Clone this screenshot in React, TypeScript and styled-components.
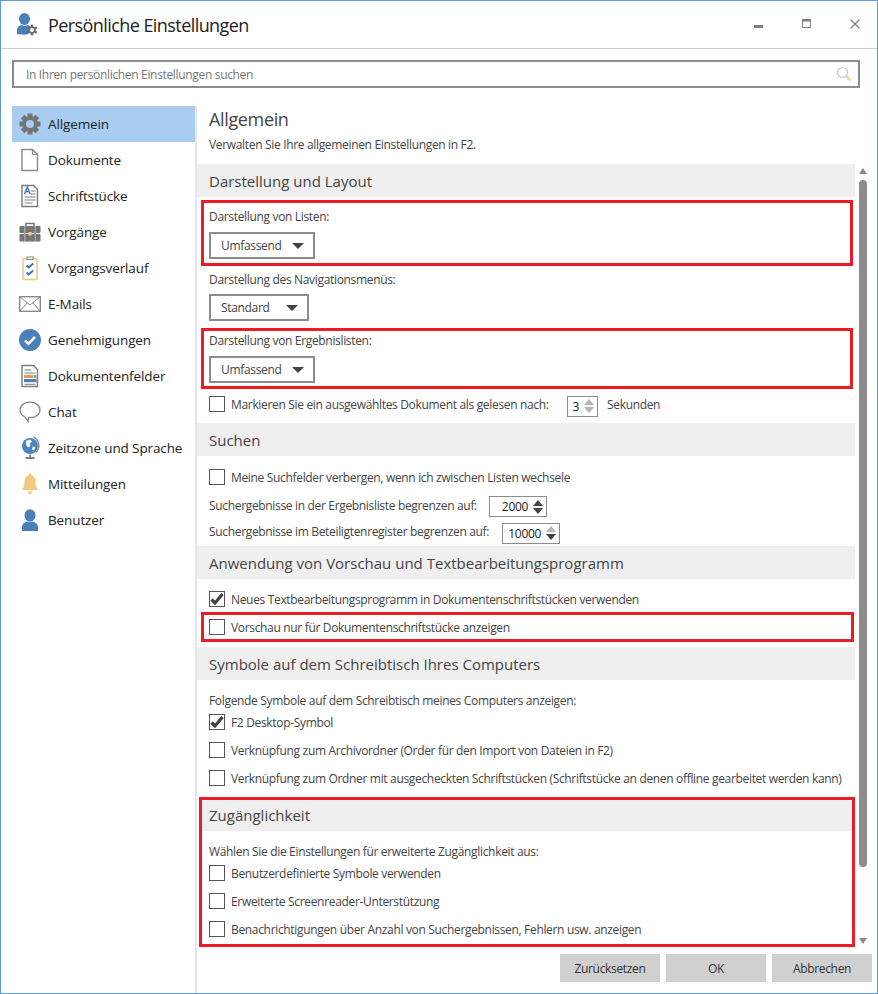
import React from "react";
import styled, { createGlobalStyle } from "styled-components";

const GlobalStyle = createGlobalStyle`
  html, body {
    margin: 0;
    padding: 0;
    background: #fff;
  }
  body {
    font-family: "Open Sans", "Liberation Sans", sans-serif;
    font-size: 12px;
    letter-spacing: -0.33px;
    color: #444;
  }
`;

const GearIcon = () => (
  <svg width="22" height="22" viewBox="0 0 22 22">
    <g fill="#757575">
      {[0, 45, 90, 135, 180, 225, 270, 315].map((a) => (
        <rect key={a} x="8.5" y="0.5" width="5" height="5" rx="0.8" transform={`rotate(${a} 11 11)`} />
      ))}
    </g>
    <circle cx="11" cy="11" r="6" fill="none" stroke="#757575" strokeWidth="4" />
  </svg>
);

const DocIcon = () => (
  <svg width="22" height="24" viewBox="0 0 22 24">
    <path d="M3 1.5h10.5l5 5v16H3z" fill="#fff" stroke="#8a8a8a" strokeWidth="1.4" />
    <path d="M13.5 1.5v5h5" fill="none" stroke="#8a8a8a" strokeWidth="1.2" />
  </svg>
);

const PaperIcon = () => (
  <svg width="22" height="24" viewBox="0 0 22 24">
    <path d="M3 1.5h11.5l4 4v17H3z" fill="#fff" stroke="#7d7d7d" strokeWidth="1.4" />
    <path d="M5.5 10l2.8-7 2.8 7M6.6 7.6h3.4" fill="none" stroke="#3f7fc4" strokeWidth="1.5" />
    <path d="M12 7h4.5M12 10h4.5M5.5 13h11M5.5 16h11M5.5 19h8" stroke="#7d7d7d" strokeWidth="1.2" />
  </svg>
);

const CaseIcon = () => (
  <svg width="22" height="20" viewBox="0 0 22 20">
    <path d="M7 4V1.5h8V4" fill="none" stroke="#757575" strokeWidth="1.5" />
    <rect x="0.5" y="4" width="21" height="7" rx="1" fill="#757575" />
    <rect x="0.5" y="12" width="21" height="7.5" rx="1" fill="#757575" />
    <rect x="5" y="4" width="1.5" height="15.5" fill="#a3a3a3" />
    <rect x="15.5" y="4" width="1.5" height="15.5" fill="#a3a3a3" />
    <rect x="9.5" y="10" width="3" height="3.5" fill="#f3c97f" />
  </svg>
);

const ClipIcon = () => (
  <svg width="22" height="26" viewBox="0 0 22 26">
    <rect x="4" y="3.5" width="14" height="21" rx="1" fill="#fff" stroke="#efc583" strokeWidth="1.5" />
    <path d="M8 4.5V2h6v2.5z" fill="#fff" stroke="#8a8a8a" strokeWidth="1.2" />
    <path d="M7.5 10.5l2.2 2 4.500-4M7.5 17.5l2.2 2 4.500-4" fill="none" stroke="#3d78b8" strokeWidth="2" />
  </svg>
);

const MailIcon = () => (
  <svg width="22" height="16" viewBox="0 0 22 16">
    <rect x="0.7" y="0.7" width="20.6" height="14.6" fill="#fff" stroke="#8a8a8a" strokeWidth="1.4" />
    <path d="M1 1l10 8 10-8M1 15l7.5-8.5M21 15l-7.5-8.5" fill="none" stroke="#8a8a8a" strokeWidth="1" />
  </svg>
);

const ApproveIcon = () => (
  <svg width="22" height="22" viewBox="0 0 22 22">
    <circle cx="11" cy="11" r="11" fill="#4a7fb8" />
    <path d="M6 11.5l3.5 3.2 6.5-6.7" fill="none" stroke="#fff" strokeWidth="2.6" />
  </svg>
);

const FieldsIcon = () => (
  <svg width="22" height="24" viewBox="0 0 22 24">
    <path d="M3 1.5h11.5l4 4v17H3z" fill="#fff" stroke="#7d7d7d" strokeWidth="1.4" />
    <path d="M5.5 6h7M5.5 9h11" stroke="#7d7d7d" strokeWidth="1.2" />
    <rect x="5" y="11" width="9" height="3" fill="#ec9a54" />
    <rect x="14.5" y="11" width="3" height="3" fill="#6fb38b" />
    <rect x="5" y="15" width="12.5" height="3.2" fill="#4a7fb8" />
    <path d="M5.5 20.3h11" stroke="#7d7d7d" strokeWidth="1" />
  </svg>
);

const ChatIcon = () => (
  <svg width="22" height="22" viewBox="0 0 22 22">
    <path d="M11 1.2c5.6 0 10 3.2 10 7.8s-4.4 7.6-9.5 7.6l-2 .1-.1 4-3.8-5C2.8 14.500 1 12 1 9c0-4.600 4.400-7.800 10-7.800z" fill="#fff" stroke="#8a8a8a" strokeWidth="1.3" />
  </svg>
);

const GlobeIcon = () => (
  <svg width="22" height="24" viewBox="0 0 22 24">
    <circle cx="11" cy="10" r="8" fill="#4a84c4" />
    <path d="M7 5l4-1.5 2 2-2.5 2.5 1 2-2.5 1.5-2-3zM13.5 10.5l3 .5-1.5 3.5-2-1z" fill="#fff" />
    <path d="M14.5 1.2a9.5 9.5 0 0 1 2.5 15.3" fill="none" stroke="#8a8a8a" strokeWidth="1.4" />
    <path d="M11 18.5v2.5M6.5 22h9" stroke="#7d7d7d" strokeWidth="1.8" />
  </svg>
);

const BellIcon = () => (
  <svg width="22" height="22" viewBox="0 0 22 22">
    <path d="M11 .5c1 0 1.5.7 1.5 1.7 3 .8 4 3.500 4 6.500 0 4 1 6.500 3 8.300H2.500c2-1.800 3-4.300 3-8.300 0-3 1-5.700 4-6.500C9.500 1.200 10 .5 11 .5z" fill="#f3c97f" />
    <path d="M8.5 18.5h5c-.3 1.8-1.300 2.800-2.500 2.800s-2.200-1-2.500-2.800z" fill="#f3c97f" />
  </svg>
);

const UserIcon = () => (
  <svg width="22" height="22" viewBox="0 0 22 22">
    <ellipse cx="11" cy="6.5" rx="5.5" ry="6.2" fill="#4a7fb8" />
    <path d="M3 22v-4c0-3 3-5 5-5.500 1.800 1 4.200 1 6 0 2 .5 5 2.500 5 5.500v4c-1 .5-15 .5-16 0z" fill="#4a7fb8" />
  </svg>
);

const UserGearIcon = () => (
  <svg width="21" height="23" viewBox="0 0 21 23">
    <ellipse cx="8.5" cy="6" rx="5.5" ry="6" fill="#4a7fb8" />
    <path d="M1 21v-4c0-3 3-4.500 4.500-5 2 1 4.500 1 6 0 2 .6 3.500 1.500 4 3l-4 6.500c-3 .3-9 .2-10.500-.5z" fill="#4a7fb8" />
    <g fill="#6f6f6f">
      {[0, 60, 120, 180, 240, 300].map((a) => (
        <rect key={a} x="14.8" y="11.6" width="2.4" height="2.4" transform={`rotate(${a} 16 17)`} />
      ))}
    </g>
    <circle cx="16" cy="17" r="2.8" fill="#fff" stroke="#6f6f6f" strokeWidth="1.8" />
  </svg>
);

const SearchIcon = () => (
  <svg width="16" height="16" viewBox="0 0 16 16">
    <circle cx="6.5" cy="6.5" r="5" fill="none" stroke="#c9c9c9" strokeWidth="1.2" />
    <path d="M10.5 10.5l4 4" stroke="#f3cf94" strokeWidth="2.4" />
  </svg>
);

const CheckMark = () => (
  <svg width="14" height="14" viewBox="0 0 14 14">
    <path d="M1.500 7.500l3.500 3.500L12.500 2" fill="none" stroke="#444" strokeWidth="3.200" />
  </svg>
);

const Window = styled.div`
  box-sizing: border-box;
  width: 878px;
  height: 994px;
  border: 1px solid #5b9bdc;
  display: flex;
  flex-direction: column;
  overflow: hidden;
`;

const TitleBar = styled.header`
  height: 47px;
  flex: none;
  display: flex;
  align-items: center;
  padding: 0 17px 0 15px;
  border-bottom: 1px solid #ccc;
`;

const AppTitle = styled.h1`
  flex: 1;
  margin: 0 0 0 11px;
  font-size: 18px;
  font-weight: 400;
  letter-spacing: -0.57px;
  color: #222;
`;

const WindowControls = styled.div`
  display: flex;
  gap: 38px;
  margin-top: -2px;
`;

const ControlIcon = styled.svg`
  display: block;
  width: 10px;
  height: 10px;
`;

const SearchBar = styled.div`
  box-sizing: border-box;
  flex: none;
  height: 28px;
  width: 848px;
  margin: 11px 0 18px 11px;
  border: 2px solid #8c8c8c;
  padding: 0 6px 0 12px;
  display: flex;
  align-items: center;
  justify-content: space-between;
  color: #777;
`;

const Body = styled.div`
  flex: 1;
  display: flex;
  min-height: 0;
`;

const Sidebar = styled.nav`
  box-sizing: border-box;
  flex: none;
  width: 196px;
  padding-left: 11px;
  border-right: 2px solid #e6e6e6;
`;

const NavItem = styled.div<{ $active?: boolean }>`
  height: 36px;
  display: flex;
  align-items: center;
  padding-left: 7px;
  font-size: 13.5px;
  letter-spacing: -0.12px;
  color: #222;
  background: ${(p) => (p.$active ? "#a8cdf0" : "transparent")};
`;

const NavIcon = styled.span`
  width: 22px;
  margin-right: 7px;
  flex: none;
  display: flex;
  align-items: center;
  justify-content: center;
`;

const Main = styled.main`
  flex: 1;
  min-width: 0;
  display: flex;
  flex-direction: column;
`;

const PageHead = styled.div`
  flex: none;
  height: 58px;
  padding-left: 12px;
`;

const PageTitle = styled.h2`
  margin: 0;
  padding-top: 1px;
  font-size: 18px;
  line-height: 24px;
  font-weight: 400;
  letter-spacing: -0.35px;
  color: #444;
`;

const PageText = styled.p`
  margin: 3px 0 0;
  line-height: 22px;
`;

const ScrollArea = styled.div`
  flex: none;
  height: 783px;
  display: flex;
`;

const Sections = styled.div`
  width: 658px;
  flex: none;
`;

const Band = styled.h3<{ $top?: number; $inner?: boolean }>`
  margin: ${(p) => p.$top ?? 0}px 0 0;
  height: ${(p) => (p.$inner ? 31 : 33)}px;
  padding-left: ${(p) => (p.$inner ? 7 : 12)}px;
  background: #efefef;
  font-size: 15px;
  line-height: ${(p) => (p.$inner ? 31 : 34)}px;
  font-weight: 400;
  letter-spacing: 0;
  color: #444;
`;

const Highlight = styled.div<{ $top: number; $left: number; $right: number; $pad?: string }>`
  box-sizing: border-box;
  border: 3px solid #ed1c24;
  margin: ${(p) => p.$top}px ${(p) => p.$right}px 0 ${(p) => p.$left}px;
  padding: ${(p) => p.$pad ?? "0"};
`;

const Plain = styled.div<{ $top?: number; $inner?: boolean }>`
  margin-top: ${(p) => p.$top ?? 0}px;
  padding-left: ${(p) => (p.$inner ? 7 : 12)}px;
`;

const Label = styled.div`
  height: 16px;
  line-height: 16px;
`;

const Select = styled.div<{ $width: number; $top?: number }>`
  box-sizing: border-box;
  width: ${(p) => p.$width}px;
  height: 27px;
  margin-top: ${(p) => p.$top ?? 7}px;
  border: 2px solid #8c8c8c;
  padding: 0 10px;
  display: flex;
  align-items: center;
  justify-content: space-between;
`;

const Caret = styled.span`
  width: 0;
  height: 0;
  margin-right: -1px;
  border-left: 6px solid transparent;
  border-right: 6px solid transparent;
  border-top: 6px solid #444;
`;

const CheckList = styled.div`
  margin-top: -1px;
`;

const CheckRow = styled.div<{ $height?: number }>`
  height: ${(p) => p.$height ?? 28}px;
  display: flex;
  align-items: center;
`;

const Box = styled.span`
  box-sizing: border-box;
  flex: none;
  width: 16px;
  height: 16px;
  margin-right: 6px;
  border: 1px solid #555;
  display: flex;
  align-items: center;
  justify-content: center;
`;

const FixedLabel = styled.span<{ $width: number }>`
  flex: none;
  width: ${(p) => p.$width}px;
`;

const Suffix = styled.span`
  margin-left: 9px;
`;

const Spin = styled.div<{ $width: number; $top?: number }>`
  box-sizing: border-box;
  flex: none;
  width: ${(p) => p.$width}px;
  height: 21px;
  position: relative;
  top: ${(p) => p.$top ?? 2}px;
  border: 1px solid #8c8c8c;
  display: flex;
  align-items: center;
  justify-content: flex-end;
  padding-right: 3px;
  color: #222;
`;

const SpinValue = styled.span`
  margin-right: 5px;
`;

const SpinArrows = styled.span`
  display: flex;
  flex-direction: column;
  gap: 2px;
`;

const SpinArrow = styled.span<{ $up?: boolean; $off?: boolean }>`
  width: 0;
  height: 0;
  border-left: 5px solid transparent;
  border-right: 5px solid transparent;
  ${(p) => (p.$up ? "border-bottom" : "border-top")}: 6px solid ${(p) => (p.$off ? "#b5b5b5" : "#444")};
`;

const LimitRow = styled.div<{ $height: number; $top?: number }>`
  height: ${(p) => p.$height}px;
  margin-top: ${(p) => p.$top ?? 0}px;
  display: flex;
  align-items: center;
`;

const Scrollbar = styled.div`
  margin-left: 4px;
  width: 8px;
  padding-top: 4px;
  display: flex;
  flex-direction: column;
  align-items: center;
`;

const ScrollArrow = styled.span<{ $up?: boolean }>`
  flex: none;
  width: 0;
  height: 0;
  border-left: 4px solid transparent;
  border-right: 4px solid transparent;
  ${(p) => (p.$up ? "border-bottom" : "border-top")}: 6px solid #8c8c8c;
`;

const Thumb = styled.span`
  flex: none;
  width: 8px;
  height: 687px;
  margin: 6px 0 71px;
  border-radius: 4px;
  background: #8c8c8c;
`;

const Footer = styled.footer`
  flex: none;
  display: flex;
  justify-content: flex-end;
  gap: 6px;
  margin-top: 7px;
  padding-right: 5px;
`;

const Button = styled.button`
  width: 100px;
  height: 28px;
  border: 0;
  padding: 0;
  background: #d0d0d0;
  font: inherit;
  letter-spacing: inherit;
  color: #333;
`;

const navItems: [string, React.ReactNode][] = [
  ["Allgemein", <GearIcon />],
  ["Dokumente", <DocIcon />],
  ["Schriftstücke", <PaperIcon />],
  ["Vorgänge", <CaseIcon />],
  ["Vorgangsverlauf", <ClipIcon />],
  ["E-Mails", <MailIcon />],
  ["Genehmigungen", <ApproveIcon />],
  ["Dokumentenfelder", <FieldsIcon />],
  ["Chat", <ChatIcon />],
  ["Zeitzone und Sprache", <GlobeIcon />],
  ["Mitteilungen", <BellIcon />],
  ["Benutzer", <UserIcon />],
];

const Check = ({ checked, children }: { checked?: boolean; children?: React.ReactNode }) => (
  <>
    <Box>{checked && <CheckMark />}</Box>
    {children}
  </>
);

export default function App() {
  return (
    <>
      <GlobalStyle />
      <Window>
        <TitleBar>
          <UserGearIcon />
          <AppTitle>Persönliche Einstellungen</AppTitle>
          <WindowControls>
            <ControlIcon viewBox="0 0 10 10">
              <rect x="0" y="6" width="9" height="3" fill="#808080" />
            </ControlIcon>
            <ControlIcon viewBox="0 0 10 10">
              <rect x="0.5" y="0.5" width="8" height="8" fill="none" stroke="#808080" />
              <rect x="0" y="0" width="9" height="2.5" fill="#808080" />
            </ControlIcon>
            <ControlIcon viewBox="0 0 10 10">
              <path d="M0.5 0.5l9 9M9.5 0.5l-9 9" stroke="#808080" strokeWidth="1.3" />
            </ControlIcon>
          </WindowControls>
        </TitleBar>
        <SearchBar>
          In Ihren persönlichen Einstellungen suchen
          <SearchIcon />
        </SearchBar>
        <Body>
          <Sidebar>
            {navItems.map(([name, icon], i) => (
              <NavItem key={name} $active={i === 0}>
                <NavIcon>{icon}</NavIcon>
                {name}
              </NavItem>
            ))}
          </Sidebar>
          <Main>
            <PageHead>
              <PageTitle>Allgemein</PageTitle>
              <PageText>Verwalten Sie Ihre allgemeinen Einstellungen in F2.</PageText>
            </PageHead>
            <ScrollArea>
              <Sections>
                <Band>Darstellung und Layout</Band>
                <Highlight $top={3} $left={4} $right={2} $pad="6px 0 4px 5px">
                  <Label>Darstellung von Listen:</Label>
                  <Select $width={106}>
                    Umfassend
                    <Caret />
                  </Select>
                </Highlight>
                <Plain $top={6}>
                  <Label>Darstellung des Navigationsmenüs:</Label>
                  <Select $width={100} $top={6}>
                    Standard
                    <Caret />
                  </Select>
                </Plain>
                <Highlight $top={7} $left={4} $right={2} $pad="2px 0 3px 5px">
                  <Label>Darstellung von Ergebnislisten:</Label>
                  <Select $width={106}>
                    Umfassend
                    <Caret />
                  </Select>
                </Highlight>
                <Plain $top={1}>
                  <CheckRow>
                    <Check />
                    <FixedLabel $width={336}>Markieren Sie ein ausgewähltes Dokument als gelesen nach:</FixedLabel>
                    <Spin $width={31}>
                      <SpinValue>3</SpinValue>
                      <SpinArrows>
                        <SpinArrow $up $off />
                        <SpinArrow $off />
                      </SpinArrows>
                    </Spin>
                    <Suffix>Sekunden</Suffix>
                  </CheckRow>
                </Plain>
                <Band $top={5}>Suchen</Band>
                <Plain $top={7}>
                  <CheckRow>
                    <Check>Meine Suchfelder verbergen, wenn ich zwischen Listen wechsele</Check>
                  </CheckRow>
                  <LimitRow $height={27} $top={1}>
                    <FixedLabel $width={280}>Suchergebnisse in der Ergebnisliste begrenzen auf:</FixedLabel>
                    <Spin $width={58} $top={1}>
                      <SpinValue>2000</SpinValue>
                      <SpinArrows>
                        <SpinArrow $up />
                        <SpinArrow />
                      </SpinArrows>
                    </Spin>
                  </LimitRow>
                  <LimitRow $height={24}>
                    <FixedLabel $width={293}>Suchergebnisse im Beteiligtenregister begrenzen auf:</FixedLabel>
                    <Spin $width={58} $top={2}>
                      <SpinValue>10000</SpinValue>
                      <SpinArrows>
                        <SpinArrow $up $off />
                        <SpinArrow />
                      </SpinArrows>
                    </Spin>
                  </LimitRow>
                </Plain>
                <Band $top={3}>Anwendung von Vorschau und Textbearbeitungsprogramm</Band>
                <Plain $top={7}>
                  <CheckRow $height={26}>
                    <Check checked>Neues Textbearbeitungsprogramm in Dokumentenschriftstücken verwenden</Check>
                  </CheckRow>
                </Plain>
                <Highlight $top={0} $left={4} $right={1} $pad="0 0 0 5px">
                  <CheckRow $height={24}>
                    <Check>Vorschau nur für Dokumentenschriftstücke anzeigen</Check>
                  </CheckRow>
                </Highlight>
                <Band $top={5}>Symbole auf dem Schreibtisch Ihres Computers</Band>
                <Plain $top={13}>
                  <Label>Folgende Symbole auf dem Schreibtisch meines Computers anzeigen:</Label>
                  <CheckList>
                    <CheckRow>
                      <Check checked>F2 Desktop-Symbol</Check>
                    </CheckRow>
                    <CheckRow>
                      <Check>Verknüpfung zum Archivordner (Order für den Import von Dateien in F2)</Check>
                    </CheckRow>
                    <CheckRow>
                      <Check>
                        Verknüpfung zum Ordner mit ausgecheckten Schriftstücken (Schriftstücke an denen offline gearbeitet werden kann)
                      </Check>
                    </CheckRow>
                  </CheckList>
                </Plain>
                <Highlight $top={5} $left={2} $right={0} $pad="0 0 1px">
                  <Band $inner>Zugänglichkeit</Band>
                  <Plain $top={13} $inner>
                    <Label>Wählen Sie die Einstellungen für erweiterte Zugänglichkeit aus:</Label>
                    <CheckList>
                      <CheckRow>
                        <Check>Benutzerdefinierte Symbole verwenden</Check>
                      </CheckRow>
                      <CheckRow>
                        <Check>Erweiterte Screenreader-Unterstützung</Check>
                      </CheckRow>
                      <CheckRow>
                        <Check>Benachrichtigungen über Anzahl von Suchergebnissen, Fehlern usw. anzeigen</Check>
                      </CheckRow>
                    </CheckList>
                  </Plain>
                </Highlight>
              </Sections>
              <Scrollbar>
                <ScrollArrow $up />
                <Thumb />
                <ScrollArrow />
              </Scrollbar>
            </ScrollArea>
            <Footer>
              <Button>Zurücksetzen</Button>
              <Button>OK</Button>
              <Button>Abbrechen</Button>
            </Footer>
          </Main>
        </Body>
      </Window>
    </>
  );
}
